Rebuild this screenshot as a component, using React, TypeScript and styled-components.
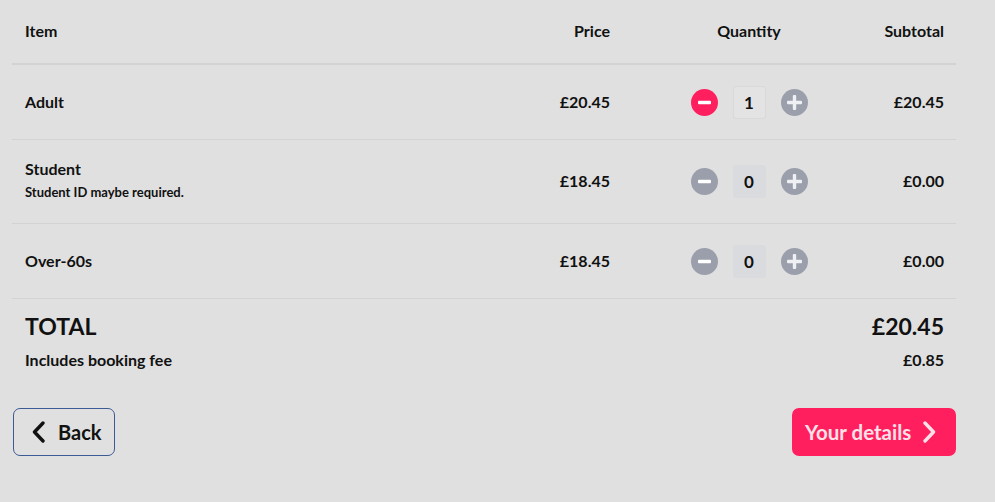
import React, { ReactElement, useState } from "react";
import styled, { createGlobalStyle } from "styled-components";

const GlobalStyle = createGlobalStyle`
  html, body {
    margin: 0;
    padding: 0;
    background: #e0e0e0;
  }
  body {
    font-family: Lato, "Noto Sans", "Liberation Sans", sans-serif;
    color: #111;
  }
`;

const Page = styled.div`
  width: 944px;
  padding: 0 12px;
`;

const Row = styled.div<{ $height: number; $thick?: boolean }>`
  display: grid;
  grid-template-columns: 408px 202px 254px 80px;
  align-items: center;
  box-sizing: border-box;
  height: ${(p) => p.$height}px;
  border-bottom: ${(p) => (p.$thick ? "2px solid #d3d3d3" : "1px solid #d3d3d3")};
`;

const Cell = styled.div<{ $align?: "left" | "right" | "center"; $lift?: number }>`
  padding: ${(p) => (p.$align === "right" ? "0 12px 0 0" : p.$align === "center" ? "0" : "0 12px 0 13px")};
  padding-bottom: ${(p) => p.$lift ?? 2}px;
  text-align: ${(p) => p.$align || "left"};
  font-weight: 700;
  font-size: 16px;
`;

const Note = styled.div`
  font-size: 13px;
  font-weight: 700;
  margin-top: 6px;
`;

const Qty = styled.div`
  display: flex;
  align-items: center;
  justify-content: center;
  gap: 15px;
`;

const RoundButton = styled.button<{ $active?: boolean }>`
  width: 27px;
  height: 27px;
  border-radius: 50%;
  border: none;
  padding: 0;
  display: flex;
  align-items: center;
  justify-content: center;
  background: ${(p) => (p.$active ? "#ff1f5e" : "#9a9fab")};
  cursor: pointer;
`;

const QtyBox = styled.div<{ $filled?: boolean }>`
  width: 33px;
  height: 33px;
  box-sizing: border-box;
  border-radius: 3px;
  display: flex;
  align-items: center;
  justify-content: center;
  font-size: 17px;
  font-weight: 700;
  background: ${(p) => (p.$filled ? "#e3e3e3" : "#d9dbdf")};
  border: 1px solid ${(p) => (p.$filled ? "#d9d9d9" : "#d9dbdf")};
`;

const Totals = styled.div`
  display: grid;
  grid-template-columns: 1fr auto;
  padding: 13px 12px 0 13px;
  row-gap: 10px;
  align-items: center;
`;

const TotalLabel = styled.div<{ $big?: boolean }>`
  font-size: ${(p) => (p.$big ? "23px" : "16px")};
  font-weight: 700;
  text-align: left;
`;

const TotalValue = styled(TotalLabel)`
  text-align: right;
`;

const Actions = styled.div`
  display: flex;
  justify-content: space-between;
  margin-top: 39px;
`;

const BackButton = styled.button`
  display: flex;
  align-items: center;
  gap: 12px;
  height: 48px;
  width: 102px;
  box-sizing: border-box;
  padding: 0 0 0 17px;
  margin-left: 1px;
  border: 1px solid #3c5a95;
  border-radius: 7px;
  background: transparent;
  font-family: inherit;
  font-size: 20px;
  font-weight: 700;
  color: #111;
`;

const NextButton = styled.button`
  display: flex;
  align-items: center;
  gap: 11px;
  height: 48px;
  width: 164px;
  box-sizing: border-box;
  padding: 0 0 0 13px;
  border: none;
  border-radius: 7px;
  background: #ff1f5e;
  font-family: inherit;
  font-size: 20.5px;
  font-weight: 700;
  color: #fde0e8;
`;

const Minus = (): ReactElement => (
  <svg width="13" height="13" viewBox="0 0 13 13">
    <rect x="0" y="4.8" width="13" height="3.4" rx="1" fill="#fff" />
  </svg>
);

const Plus = (): ReactElement => (
  <svg width="15" height="15" viewBox="0 0 15 15">
    <rect x="0" y="5.8" width="15" height="3.4" rx="1" fill="#eef0f3" />
    <rect x="5.8" y="0" width="3.4" height="15" rx="1" fill="#eef0f3" />
  </svg>
);

const Chevron = ({ dir, color }: { dir: "left" | "right"; color: string }): ReactElement => (
  <svg width="15" height="22" viewBox="0 0 15 22">
    <path
      d={dir === "left" ? "M12 2 L3.5 11 L12 20" : "M3 2 L11.5 11 L3 20"}
      fill="none"
      stroke={color}
      strokeWidth="3.4"
      strokeLinecap="round"
      strokeLinejoin="round"
    />
  </svg>
);

type Ticket = { name: string; note?: string; price: number; height: number };

const tickets: Ticket[] = [
  { name: "Adult", price: 20.45, height: 75 },
  { name: "Student", note: "Student ID maybe required.", price: 18.45, height: 84 },
  { name: "Over-60s", price: 18.45, height: 75 },
];

const money = (n: number): string => `£${n.toFixed(2)}`;

const App = (): ReactElement => {
  const [counts, setCounts] = useState<number[]>([1, 0, 0]);
  const fee = 0.85;
  const total = counts.reduce((s, c, i) => s + c * tickets[i].price, 0);

  const change = (i: number, d: number) => {
    setCounts((prev) => prev.map((c, j) => (j === i ? Math.max(0, c + d) : c)));
  };

  return (
    <Page>
      <GlobalStyle />
      <Row $height={65} $thick>
        <Cell>Item</Cell>
        <Cell $align="right">Price</Cell>
        <Cell $align="center">Quantity</Cell>
        <Cell $align="right">Subtotal</Cell>
      </Row>
      {tickets.map((t, i) => (
        <Row key={t.name} $height={t.height}>
          <Cell $lift={t.note ? 5 : 2}>
            {t.name}
            {t.note && <Note>{t.note}</Note>}
          </Cell>
          <Cell $align="right">{money(t.price)}</Cell>
          <Qty>
            <RoundButton $active={counts[i] > 0} onClick={() => change(i, -1)}>
              <Minus />
            </RoundButton>
            <QtyBox $filled={counts[i] > 0}>{counts[i]}</QtyBox>
            <RoundButton onClick={() => change(i, 1)}>
              <Plus />
            </RoundButton>
          </Qty>
          <Cell $align="right">{money(counts[i] * t.price)}</Cell>
        </Row>
      ))}
      <Totals>
        <TotalLabel $big>TOTAL</TotalLabel>
        <TotalValue $big>{money(total)}</TotalValue>
        <TotalLabel>Includes booking fee</TotalLabel>
        <TotalValue>{money(fee)}</TotalValue>
      </Totals>
      <Actions>
        <BackButton>
          <Chevron dir="left" color="#111" />
          Back
        </BackButton>
        <NextButton>
          Your details
          <Chevron dir="right" color="#fde0e8" />
        </NextButton>
      </Actions>
    </Page>
  );
};

export default App;
